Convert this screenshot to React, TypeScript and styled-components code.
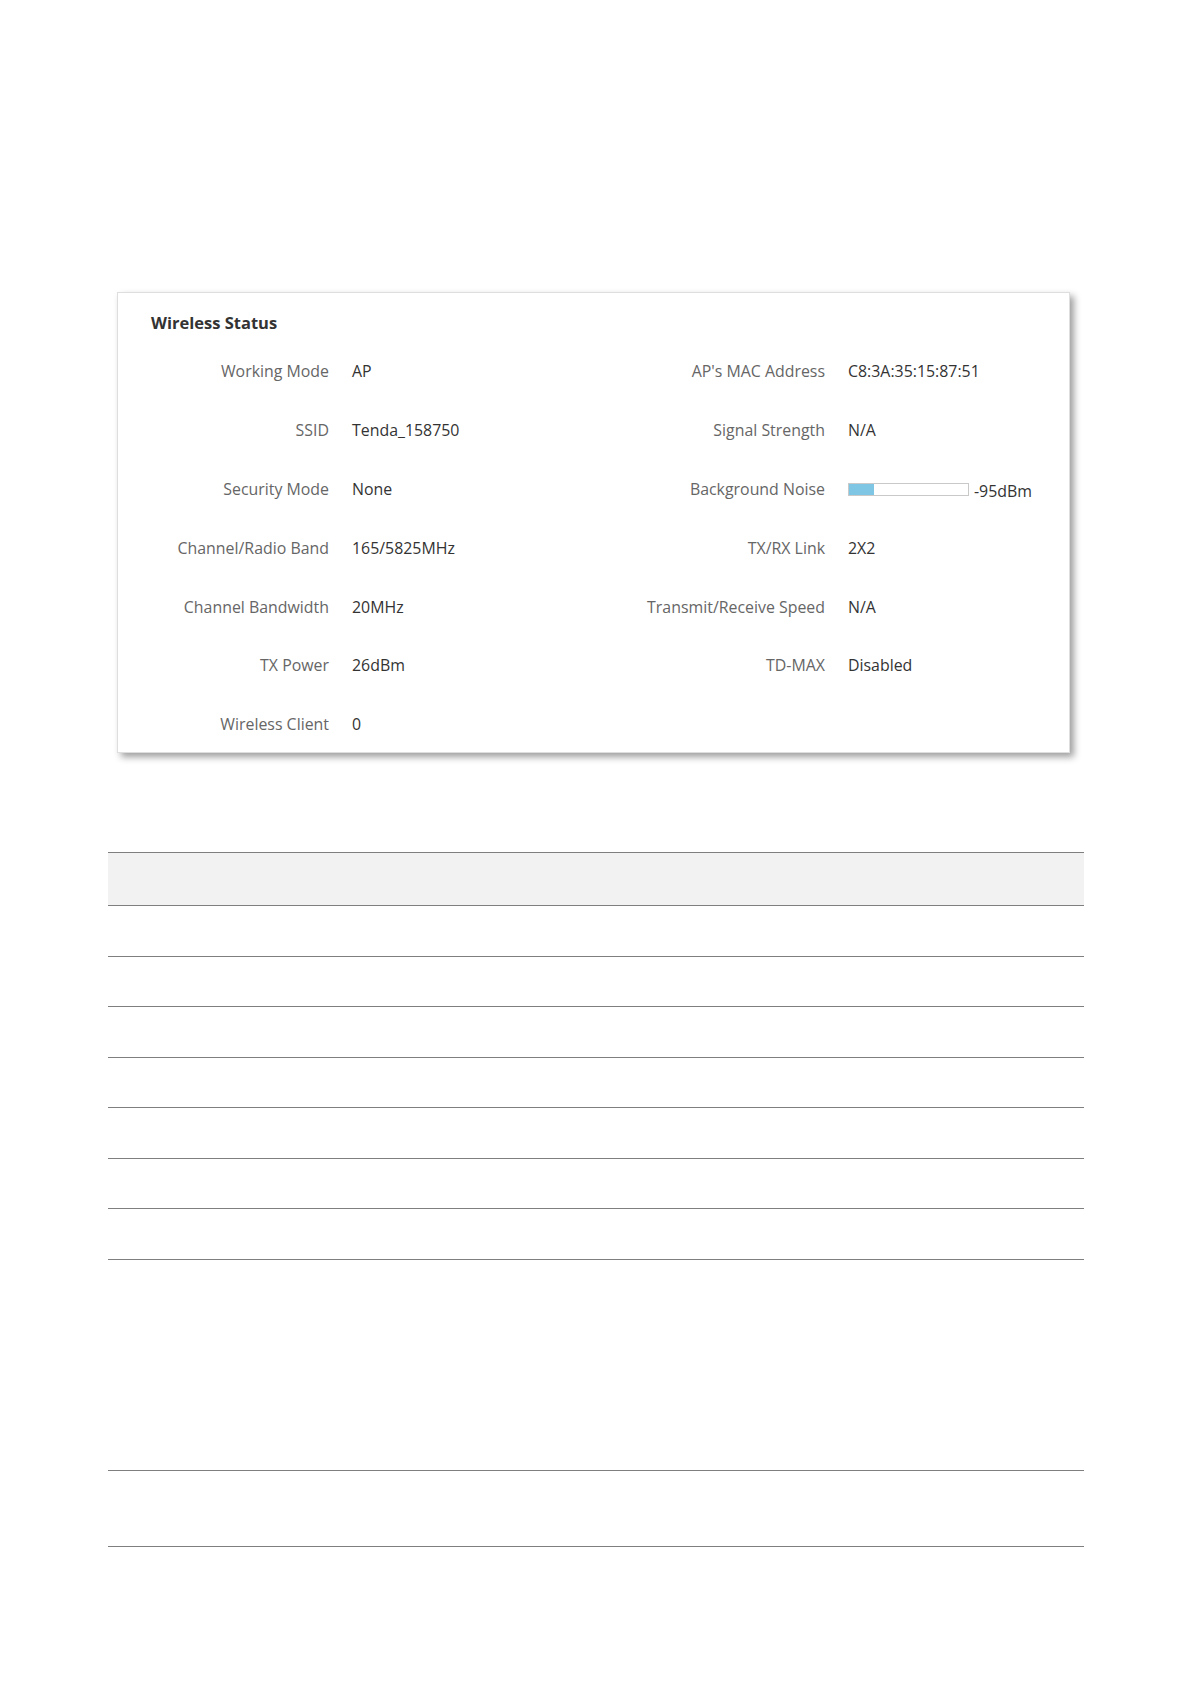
import * as React from 'react';
import styled, { createGlobalStyle } from 'styled-components';

const GlobalStyle = createGlobalStyle`
  html, body {
    margin: 0;
    padding: 0;
    background: #ffffff;
  }
  body {
    font-family: "Open Sans", "Noto Sans", "Liberation Sans", sans-serif;
  }
`;

const Page = styled.div`
  width: 1191px;
  min-height: 1684px;
  padding-top: 292px;
  box-sizing: border-box;
`;

const Card = styled.section`
  margin-left: 117px;
  width: 953px;
  height: 461px;
  box-sizing: border-box;
  padding: 0 33px;
  background: #ffffff;
  border: 1px solid #dedede;
  box-shadow: 4px 4px 7px rgba(0, 0, 0, 0.38);
`;

const Title = styled.h2`
  margin: 18px 0 0;
  height: 31px;
  line-height: 24px;
  font-size: 16.5px;
  font-weight: 700;
  color: #333333;
`;

const InfoGrid = styled.div`
  display: grid;
  grid-template-columns: 178px 250px 200px 1fr;
  column-gap: 23px;
  grid-auto-rows: 58.8px;
  align-items: center;
  font-size: 15.9px;
`;

const Label = styled.div`
  text-align: right;
  color: #666666;
  white-space: nowrap;
`;

const Value = styled.div`
  color: #333333;
  white-space: nowrap;
  display: flex;
  align-items: center;
`;

const NoiseBar = styled.div`
  width: 121px;
  height: 13px;
  box-sizing: border-box;
  border: 1px solid #c9c9c9;
  background: #ffffff;
  margin-top: 1px;
`;

const NoiseFill = styled.div`
  height: 100%;
  background: #7ec6e3;
`;

const NoiseText = styled.span`
  margin-left: 5px;
  margin-top: 4px;
`;

const Table = styled.div<{ $top: number }>`
  margin: ${(p) => p.$top}px 0 0 108px;
  width: 976px;
  border-top: 1px solid #7f7f7f;
`;

const Row = styled.div<{ $height: number; $head?: boolean }>`
  height: ${(p) => p.$height}px;
  border-bottom: 1px solid #7f7f7f;
  background: ${(p) => (p.$head ? '#f2f2f2' : '#ffffff')};
`;

type Item = { label: string; value: React.ReactNode };

const left: Item[] = [
  { label: 'Working Mode', value: 'AP' },
  { label: 'SSID', value: 'Tenda_158750' },
  { label: 'Security Mode', value: 'None' },
  { label: 'Channel/Radio Band', value: '165/5825MHz' },
  { label: 'Channel Bandwidth', value: '20MHz' },
  { label: 'TX Power', value: '26dBm' },
  { label: 'Wireless Client', value: '0' },
];

const noise = -95;
const noisePercent = 21;

const right: Item[] = [
  { label: "AP's MAC Address", value: 'C8:3A:35:15:87:51' },
  { label: 'Signal Strength', value: 'N/A' },
  {
    label: 'Background Noise',
    value: (
      <>
        <NoiseBar>
          <NoiseFill style={{ width: `${noisePercent}%` }} />
        </NoiseBar>
        <NoiseText>{noise}dBm</NoiseText>
      </>
    ),
  },
  { label: 'TX/RX Link', value: '2X2' },
  { label: 'Transmit/Receive Speed', value: 'N/A' },
  { label: 'TD-MAX', value: 'Disabled' },
];

export default function App() {
  return (
    <Page>
      <GlobalStyle />
      <Card>
        <Title>Wireless Status</Title>
        <InfoGrid>
          {left.map((item, i) => (
            <React.Fragment key={item.label}>
              <Label>{item.label}</Label>
              <Value>{item.value}</Value>
              {right[i] ? (
                <>
                  <Label>{right[i].label}</Label>
                  <Value>{right[i].value}</Value>
                </>
              ) : (
                <>
                  <div />
                  <div />
                </>
              )}
            </React.Fragment>
          ))}
        </InfoGrid>
      </Card>

      <Table $top={99}>
        <Row $height={52} $head />
        {[0, 1, 2, 3, 4, 5, 6].map((i) => (
          <Row key={i} $height={49.5} />
        ))}
      </Table>

      <Table $top={210}>
        <Row $height={75} />
      </Table>
    </Page>
  );
}
